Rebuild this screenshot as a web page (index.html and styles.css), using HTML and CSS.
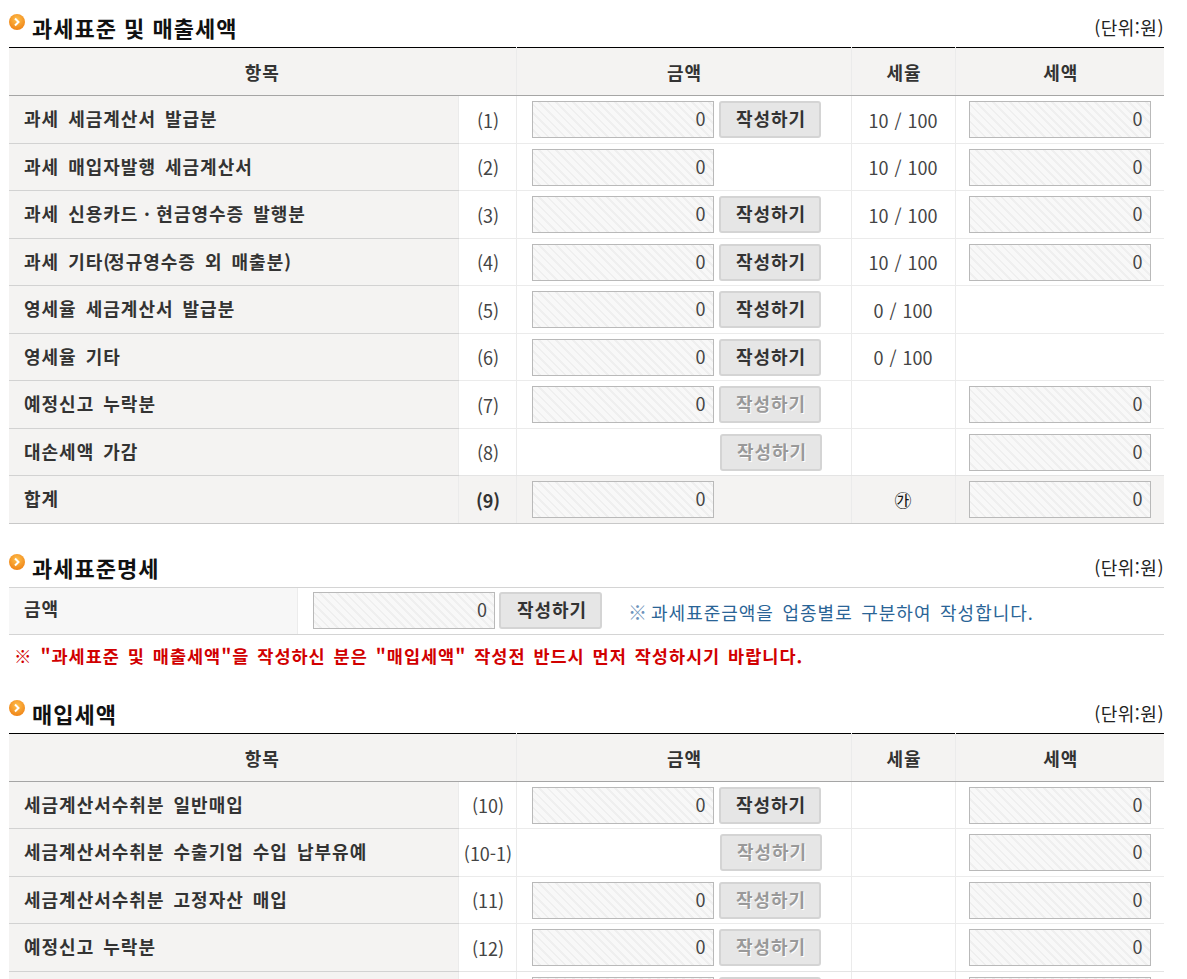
FILE: index.html
```html
<!DOCTYPE html>
<html lang="ko">
<head>
<meta charset="utf-8">
<title>부가가치세 신고서</title>
<link rel="stylesheet" href="styles.css">
</head>
<body>
<svg class="defs" width="0" height="0" aria-hidden="true"><defs><radialGradient id="org" cx="0.5" cy="0.35" r="0.7"><stop offset="0" stop-color="#ffc04d"/><stop offset="1" stop-color="#ee7f12"/></radialGradient></defs></svg>

<div class="heading">
  <h2 class="title"><svg class="bullet" viewBox="0 0 16 16"><circle cx="8" cy="8" r="8" fill="url(#org)"/><path d="M6 4.5 9.5 8 6 11.5" fill="none" stroke="#fff" stroke-width="2"/></svg>과세표준 및 매출세액</h2>
  <span class="unit">(단위:원)</span>
</div>
<table class="grid">
  <colgroup><col class="c1"><col class="c2"><col class="c3"><col class="c4"><col class="c5"></colgroup>
  <thead><tr><th colspan="2">항목</th><th>금액</th><th>세율</th><th>세액</th></tr></thead>
  <tbody>
    <tr><th>과세 세금계산서 발급분</th><td class="num">(1)</td><td><div class="amt"><div class="field">0</div><button class="btn">작성하기</button></div></td><td class="rate">10 / 100</td><td><div class="field tax">0</div></td></tr>
    <tr><th>과세 매입자발행 세금계산서</th><td class="num">(2)</td><td><div class="amt"><div class="field">0</div></div></td><td class="rate">10 / 100</td><td><div class="field tax">0</div></td></tr>
    <tr><th>과세 신용카드<span class="dot"> · </span>현금영수증 발행분</th><td class="num">(3)</td><td><div class="amt"><div class="field">0</div><button class="btn">작성하기</button></div></td><td class="rate">10 / 100</td><td><div class="field tax">0</div></td></tr>
    <tr><th>과세 기타<span class="paren">(</span>정규영수증 외 매출분<span class="paren">)</span></th><td class="num">(4)</td><td><div class="amt"><div class="field">0</div><button class="btn">작성하기</button></div></td><td class="rate">10 / 100</td><td><div class="field tax">0</div></td></tr>
    <tr><th>영세율 세금계산서 발급분</th><td class="num">(5)</td><td><div class="amt"><div class="field">0</div><button class="btn">작성하기</button></div></td><td class="rate">0 / 100</td><td></td></tr>
    <tr><th>영세율 기타</th><td class="num">(6)</td><td><div class="amt"><div class="field">0</div><button class="btn">작성하기</button></div></td><td class="rate">0 / 100</td><td></td></tr>
    <tr><th>예정신고 누락분</th><td class="num">(7)</td><td><div class="amt"><div class="field">0</div><button class="btn off">작성하기</button></div></td><td></td><td><div class="field tax">0</div></td></tr>
    <tr><th>대손세액 가감</th><td class="num">(8)</td><td><div class="amt"><button class="btn off solo">작성하기</button></div></td><td></td><td><div class="field tax">0</div></td></tr>
    <tr class="sum"><th>합계</th><td class="num">(9)</td><td><div class="amt"><div class="field">0</div></div></td><td class="rate mark">㉮</td><td><div class="field tax">0</div></td></tr>
  </tbody>
</table>

<div class="heading next">
  <h2 class="title"><svg class="bullet" viewBox="0 0 16 16"><circle cx="8" cy="8" r="8" fill="url(#org)"/><path d="M6 4.5 9.5 8 6 11.5" fill="none" stroke="#fff" stroke-width="2"/></svg>과세표준명세</h2>
  <span class="unit">(단위:원)</span>
</div>
<div class="detail">
  <div class="detail-label">금액</div>
  <div class="detail-body"><div class="field">0</div><button class="btn tight">작성하기</button><p class="hint"><span class="hint-mark">※</span>과세표준금액을 업종별로 구분하여 작성합니다.</p></div>
</div>
<p class="warn">※ "과세표준 및 매출세액"을 작성하신 분은 "매입세액" 작성전 반드시 먼저 작성하시기 바랍니다.</p>

<div class="heading third">
  <h2 class="title"><svg class="bullet" viewBox="0 0 16 16"><circle cx="8" cy="8" r="8" fill="url(#org)"/><path d="M6 4.5 9.5 8 6 11.5" fill="none" stroke="#fff" stroke-width="2"/></svg>매입세액</h2>
  <span class="unit">(단위:원)</span>
</div>
<table class="grid">
  <colgroup><col class="c1"><col class="c2"><col class="c3"><col class="c4"><col class="c5"></colgroup>
  <thead><tr><th colspan="2">항목</th><th>금액</th><th>세율</th><th>세액</th></tr></thead>
  <tbody>
    <tr><th>세금계산서수취분 일반매입</th><td class="num">(10)</td><td><div class="amt"><div class="field">0</div><button class="btn">작성하기</button></div></td><td></td><td><div class="field tax">0</div></td></tr>
    <tr><th>세금계산서수취분 수출기업 수입 납부유예</th><td class="num">(10-1)</td><td><div class="amt"><button class="btn off solo">작성하기</button></div></td><td></td><td><div class="field tax">0</div></td></tr>
    <tr><th>세금계산서수취분 고정자산 매입</th><td class="num">(11)</td><td><div class="amt"><div class="field">0</div><button class="btn off">작성하기</button></div></td><td></td><td><div class="field tax">0</div></td></tr>
    <tr><th>예정신고 누락분</th><td class="num">(12)</td><td><div class="amt"><div class="field">0</div><button class="btn off">작성하기</button></div></td><td></td><td><div class="field tax">0</div></td></tr>
    <tr><th></th><td class="num"></td><td><div class="amt"><div class="field"></div><button class="btn off"></button></div></td><td></td><td><div class="field tax"></div></td></tr>
  </tbody>
</table>
</body>
</html>
```

FILE: styles.css
```css
* { box-sizing: border-box; }
html { height: 979px; overflow: hidden; }
body {
  margin: 0;
  padding: 0 23px 0 9px;
  height: 979px;
  overflow: hidden;
  background: #fff;
  color: #333;
  font-family: "Noto Sans CJK KR", "Noto Sans", sans-serif;
  font-size: 18px;
}
.defs { position: absolute; }
.heading {
  height: 47px;
  display: flex;
  justify-content: space-between;
  align-items: flex-end;
  padding-bottom: 5px;
}
.heading.next { margin-top: 16px; }
.heading.third { margin-top: 10px; }
.title {
  margin: 0;
  display: flex;
  align-items: flex-end;
  font-size: 22px;
  letter-spacing: 1px;
  line-height: 30px;
  font-weight: 700;
  color: #111;
  position: relative;
  padding-left: 23px;
}
.bullet { position: absolute; left: 0; top: 2px; width: 16px; height: 16px; }
.unit { font-size: 18px; letter-spacing: 0.5px; line-height: 26px; color: #222; padding-bottom: 2px; }

.grid {
  width: 1155px;
  table-layout: fixed;
  border-collapse: collapse;
  border-top: 1px solid #000;
}
.c1 { width: 449px; }
.c2 { width: 58px; }
.c3 { width: 335px; }
.c4 { width: 104px; }
.c5 { width: 209px; }
.grid thead th {
  height: 48px;
  background: #f4f3f2;
  border-bottom: 1px solid #a5a5a5;
  border-left: 1px solid #ebebeb;
  font-size: 18px;
  letter-spacing: 1px;
  font-weight: 700;
  color: #333;
  text-align: center;
  padding: 1px 0 0 2px;
}
.grid thead th:first-child { border-left: 0; padding-left: 0; }
.grid tbody tr { height: 47.5px; }
.grid tbody th {
  background: #f4f3f2;
  font-size: 18px;
  letter-spacing: 1px;
  word-spacing: 3px;
  font-weight: 700;
  color: #333;
  text-align: left;
  padding: 0 0 2px 15px;
  white-space: nowrap;
  border-bottom: 1px solid #d2d2d2;
}
.dot { word-spacing: -0.5px; }
.paren { letter-spacing: -2px; }
.grid tbody td {
  padding: 0.5px 0 0;
  border-left: 1px solid #ebebeb;
  border-bottom: 1px solid #ebebeb;
}
.grid tbody tr:nth-last-child(2) td { border-bottom-color: #e4e4e4; }
.grid .sum th, .grid .sum td { border-bottom-color: #c8c8c8; }
.grid tbody .num { text-align: center; color: #444; font-size: 18px; padding-left: 2px; }
.rate { text-align: center; color: #444; font-size: 18px; word-spacing: 1px; }
.grid .mark { color: #111; font-size: 17px; }
.amt { display: flex; align-items: center; gap: 5px; padding-left: 15px; }
.field {
  width: 182px;
  height: 37px;
  flex: none;
  border: 1px solid #b9b9b9;
  background: repeating-linear-gradient(45deg, #f8f8f8 0 4px, #efefef 4px 6px);
  text-align: right;
  padding-right: 7px;
  font-size: 18px;
  line-height: 32px;
  color: #444;
}
.tax { margin-left: 13px; }
.btn {
  width: 102px;
  height: 37px;
  flex: none;
  padding: 0 0 3px 3px;
  border: 2px solid #d4d4d4;
  border-radius: 3px;
  background: #e6e6e6;
  font-family: inherit;
  font-size: 18px;
  letter-spacing: 1px;
  font-weight: 700;
  color: #333;
}
.btn.off { color: #999; text-shadow: 1px 1px 0 #fff; }
.btn.solo { margin-left: 188px; }
.btn.tight { margin-left: -1px; width: 103px; }
.sum td, .sum th { background: #f4f3f2; }
.grid tbody .sum .num { font-weight: 700; color: #333; }

.detail {
  display: flex;
  height: 48px;
  border-top: 1px solid #d4d4d4;
  border-bottom: 1px solid #d4d4d4;
}
.detail-label {
  width: 289px;
  background: #f7f7f7;
  border-right: 1px solid #ececec;
  padding: 0 0 3px 15px;
  font-size: 18px;
  letter-spacing: 1px;
  font-weight: 700;
  line-height: 41px;
}
.detail-body { display: flex; align-items: center; gap: 5px; padding-left: 15px; }
.hint { margin: 2px 0 0 21px; font-size: 18px; letter-spacing: 1px; word-spacing: 2.5px; color: #2a6496; white-space: nowrap; }
.hint-mark { color: #6f93bb; font-size: 19px; line-height: 1; margin-right: 4px; letter-spacing: 0; }
.warn {
  margin: 0;
  height: 41px;
  padding-left: 5px;
  font-size: 17.5px;
  letter-spacing: 1px;
  word-spacing: 2px;
  line-height: 42px;
  font-weight: 700;
  color: #d10000;
  white-space: nowrap;
}
```
